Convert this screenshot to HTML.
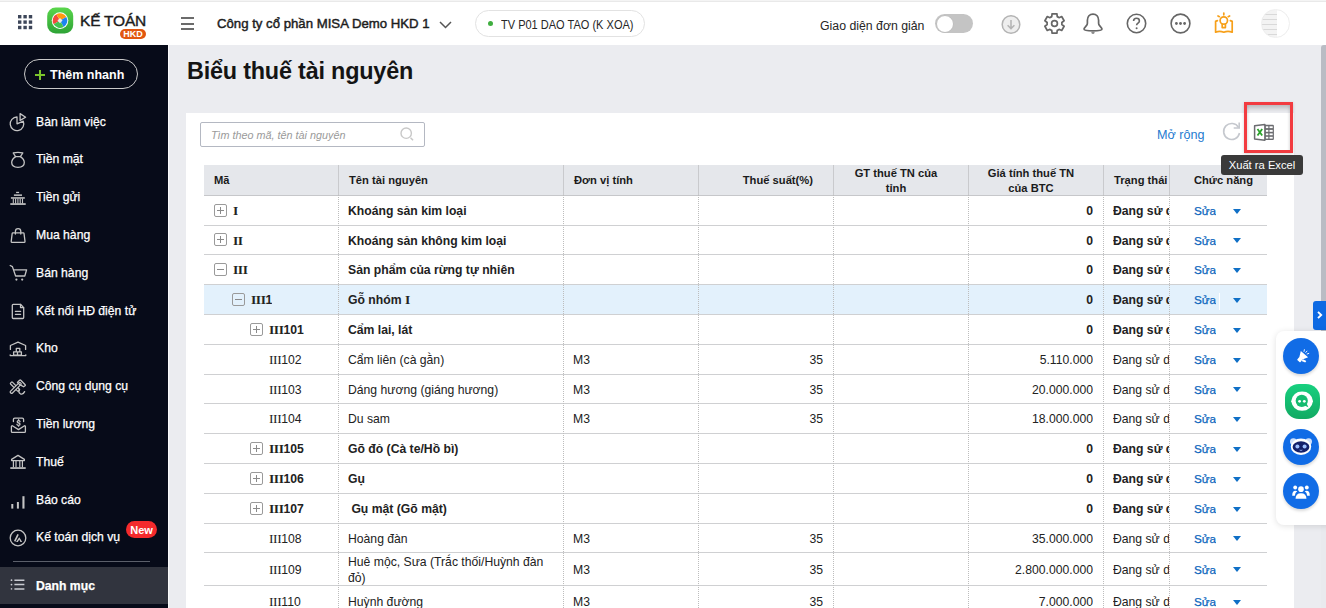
<!DOCTYPE html><html><head><meta charset="utf-8"><style>
*{box-sizing:border-box;margin:0;padding:0}
html,body{width:1326px;height:608px;overflow:hidden;background:#ebecf0;font-family:"Liberation Sans",sans-serif;color:#1f1f1f}
.a{position:absolute}
.nw{white-space:nowrap}
#top{position:absolute;left:0;top:0;width:1326px;height:45px;background:#fff}
#side{position:absolute;left:0;top:45px;width:168px;height:563px;background:#070b19}
#panel{position:absolute;left:186px;top:113px;width:1108px;height:495px;background:#fff}
.nav{position:absolute;left:36px;color:#fff;font-size:12.2px;white-space:nowrap;line-height:16px;-webkit-text-stroke:0.25px #fff}
.ico{position:absolute;left:9px;width:18px;height:18px}
.th{position:absolute;top:165px;height:30px;background:#e5e7eb;font-weight:bold;font-size:11.2px;line-height:15px;color:#1b1b1b;white-space:nowrap;display:flex;align-items:center;border-right:1px solid #c9cacd}
.row{position:absolute;left:204px;width:1063px;border-bottom:1px solid #cfd0d2}
.c{position:absolute;top:0;height:100%;padding-top:1px;display:flex;align-items:center;font-size:12.2px;color:#222;white-space:nowrap;overflow:hidden}
.vl{position:absolute;top:195px;width:0;height:413px;border-left:1px dotted #bdbdbd}
.box{position:absolute;width:13px;height:13px;border:1px solid #9a9a9a;border-radius:2px}
.box:before{content:"";position:absolute;left:2px;top:5px;width:7px;height:1px;background:#8a8a8a}
.box.p:after{content:"";position:absolute;left:5px;top:2px;width:1px;height:7px;background:#8a8a8a}
.sua{padding-top:0 !important;color:#0c66bd;font-size:11.7px;-webkit-text-stroke:0.25px #0c66bd}
.tri{position:absolute;width:0;height:0;border-left:4.5px solid transparent;border-right:4.5px solid transparent;border-top:5px solid #0f6fc6}
</style></head><body>
<div id="top"><div class="a" style="left:0;top:0;width:1326px;height:1px;background:#f4f4f4"></div><div class="a" style="left:0;top:1px;width:1326px;height:1px;background:#e9e9e9"></div>
<svg class="a" style="left:18px;top:15px" width="15" height="15" viewBox="0 0 15 15"><rect x="0.0" y="0.0" width="3.4" height="3.4" fill="#3d4659"/><rect x="5.4" y="0.0" width="3.4" height="3.4" fill="#3d4659"/><rect x="10.8" y="0.0" width="3.4" height="3.4" fill="#3d4659"/><rect x="0.0" y="5.4" width="3.4" height="3.4" fill="#3d4659"/><rect x="5.4" y="5.4" width="3.4" height="3.4" fill="#3d4659"/><rect x="10.8" y="5.4" width="3.4" height="3.4" fill="#3d4659"/><rect x="0.0" y="10.8" width="3.4" height="3.4" fill="#3d4659"/><rect x="5.4" y="10.8" width="3.4" height="3.4" fill="#3d4659"/><rect x="10.8" y="10.8" width="3.4" height="3.4" fill="#3d4659"/></svg>
<svg class="a" style="left:47px;top:6.5px" width="27" height="27" viewBox="0 0 27 27"><defs><linearGradient id="lg" x1="0" y1="0" x2="0" y2="1"><stop offset="0" stop-color="#5ad64c"/><stop offset="1" stop-color="#2ea336"/></linearGradient></defs><rect x="0.2" y="0.6" width="26" height="25.8" rx="8.5" fill="url(#lg)"/><circle cx="13" cy="13.6" r="8.3" fill="#fff"/><path d="M13.00 13.60 L6.68 17.25 A7.30 7.30 0 0 1 9.35 7.28 Z" fill="#f44a3c"/><path d="M13.00 13.60 L9.35 7.28 A7.30 7.30 0 0 1 19.32 9.95 Z" fill="#ff9a10"/><path d="M13.00 13.60 L19.32 9.95 A7.30 7.30 0 0 1 16.65 19.92 Z" fill="#1d84f0"/><path d="M13.00 13.60 L16.65 19.92 A7.30 7.30 0 0 1 6.68 17.25 Z" fill="#43c251"/><rect x="11.2" y="11.8" width="3.6" height="3.6" transform="rotate(45 13 13.6)" fill="#e9e9e9"/></svg>
<div class="a nw" style="left:80px;top:12px;font-size:15.5px;line-height:18px;color:#1d1d1d;letter-spacing:-0.2px;-webkit-text-stroke:0.4px #1d1d1d">KẾ TOÁN</div>
<div class="a" style="left:120px;top:29px;width:26px;height:10px;border-radius:5px;background:#e2560f;color:#fff;font-size:9px;font-weight:bold;line-height:10px;text-align:center">HKD</div>
<div class="a" style="left:181px;top:17px;width:13px;height:2px;background:#6b6b6b"></div>
<div class="a" style="left:181px;top:22.5px;width:13px;height:2px;background:#6b6b6b"></div>
<div class="a" style="left:181px;top:28px;width:13px;height:2px;background:#6b6b6b"></div>
<div class="a nw" style="left:217px;top:15px;font-size:13.2px;line-height:17px;color:#1d1d1d;-webkit-text-stroke:0.45px #1d1d1d">Công ty cổ phần MISA Demo HKD 1</div>
<svg class="a" style="left:439px;top:21px" width="13" height="8" viewBox="0 0 13 8"><path d="M1 1 L6.5 6.5 L12 1" fill="none" stroke="#555" stroke-width="1.5"/></svg>
<div class="a" style="left:475px;top:10px;width:170px;height:27px;border:1px solid #e2e2e2;border-radius:14px"></div>
<div class="a" style="left:487.5px;top:21px;width:5px;height:5px;border-radius:50%;background:#3fae3f"></div>
<div class="a nw" style="left:501px;top:18px;font-size:12.6px;line-height:15px;color:#262626;transform:scaleX(0.875);transform-origin:0 50%">TV P01 DAO TAO (K XOA)</div>
<div class="a nw" style="left:820px;top:17.5px;font-size:12.3px;line-height:16px;color:#262626">Giao diện đơn giản</div>
<div class="a" style="left:935px;top:14px;width:38px;height:19px;border-radius:10px;background:#c4c4c4"></div>
<div class="a" style="left:935.5px;top:14.5px;width:18px;height:18px;border-radius:50%;background:#fff;border:1px solid #bdbdbd"></div>
<svg class="a" style="left:1000px;top:13.5px" width="22" height="21" viewBox="0 0 22 21"><circle cx="11" cy="10.5" r="8.8" fill="#eeeeee" stroke="#b3b3b3" stroke-width="1.5"/><path d="M11 6 V14.6 M7.6 11.3 L11 14.6 L14.4 11.3" fill="none" stroke="#b3b3b3" stroke-width="1.5"/></svg>
<svg class="a" style="left:1044px;top:13px" width="21" height="21" viewBox="0 0 21 21"><path fill="none" stroke="#666" stroke-width="1.7" stroke-linejoin="round" d="M13.27 17.36L12.92 20.20L8.08 20.20L7.73 17.36A7.4 7.4 0 0 1 5.94 16.33L3.31 17.45L0.89 13.26L3.17 11.53A7.4 7.4 0 0 1 3.17 9.47L0.89 7.74L3.31 3.55L5.94 4.67A7.4 7.4 0 0 1 7.73 3.64L8.08 0.80L12.92 0.80L13.27 3.64A7.4 7.4 0 0 1 15.06 4.67L17.69 3.55L20.11 7.74L17.83 9.47A7.4 7.4 0 0 1 17.83 11.53L20.11 13.26L17.69 17.45L15.06 16.33A7.4 7.4 0 0 1 13.27 17.36Z"/><circle cx="10.5" cy="10.5" r="2.9" fill="none" stroke="#666" stroke-width="1.7"/></svg>
<svg class="a" style="left:1082px;top:13px" width="22" height="22" viewBox="0 0 22 22"><path fill="none" stroke="#666" stroke-width="1.7" d="M11 1.1C7.6 1.1 5.4 3.6 5.4 7.2V10.2C5.4 11.2 5 12 4.2 12.9C3.2 14 2 15 2 16C2 17.4 6 17.8 11 17.8S20 17.4 20 16C20 15 18.8 14 17.8 12.9C17 12 16.6 11.2 16.6 10.2V7.2C16.6 3.6 14.4 1.1 11 1.1Z"/><path d="M9.2 19.2H12.8Q12.4 20.8 11 20.8Q9.6 20.8 9.2 19.2Z" fill="#666"/></svg>
<svg class="a" style="left:1126px;top:13px" width="21" height="21" viewBox="0 0 21 21"><circle cx="10.5" cy="10.5" r="9.2" fill="none" stroke="#666" stroke-width="1.6"/><path d="M7.6 8.1c0-1.7 1.3-2.8 2.9-2.8s2.9 1 2.9 2.6c0 2.1-2.8 2.2-2.8 4.3" fill="none" stroke="#666" stroke-width="1.6"/><circle cx="10.6" cy="15.2" r="1" fill="#666"/></svg>
<svg class="a" style="left:1170px;top:13px" width="21" height="21" viewBox="0 0 21 21"><circle cx="10.5" cy="10.5" r="9.4" fill="none" stroke="#666" stroke-width="1.6"/><circle cx="6.4" cy="10.5" r="1.4" fill="#666"/><circle cx="10.5" cy="10.5" r="1.4" fill="#666"/><circle cx="14.6" cy="10.5" r="1.4" fill="#666"/></svg>
<svg class="a" style="left:1208px;top:8px" width="32" height="30" viewBox="0 0 32 30"><g fill="none" stroke="#f7a01a" stroke-width="1.7" stroke-linecap="round" stroke-linejoin="round"><path d="M9.4 12.6L7.6 13.4V24.2Q11.6 22.4 15.8 24.2Q20 22.4 24.2 24.2V13.4L22.4 12.6"/><circle cx="15.8" cy="12.5" r="3.7"/><path d="M14.2 16V19.6H17.4V16"/><path d="M15.8 5V6.8M10 7.9L11.4 8.7M21.6 7.9L20.2 8.7"/></g></svg>
<div class="a" style="left:1261px;top:9px;width:29px;height:29px;border-radius:50%;border:1px solid #eee;background:linear-gradient(90deg,transparent 55%,#fff 55%),repeating-linear-gradient(180deg,#f3f3f3 0,#f3f3f3 4px,#d9d9d9 4px,#d9d9d9 5px);overflow:hidden"></div>
</div>
<div id="side">
<div class="a" style="left:24px;top:14px;width:114px;height:30px;border:1px solid #c9c9c9;border-radius:15px"></div>
<div class="a" style="left:35px;top:29px;width:10px;height:2px;background:#7bc52c"></div>
<div class="a" style="left:39px;top:25px;width:2px;height:10px;background:#7bc52c"></div>
<div class="a nw" style="left:50px;top:22px;font-size:12.5px;line-height:17px;color:#fff;font-weight:bold">Thêm nhanh</div>
<div class="nav" style="top:68.5px">Bàn làm việc</div>
<svg class="a" style="left:6px;top:63px" width="24" height="26" viewBox="0 0 24 26"><path fill="none" stroke="#c4c4c4" stroke-width="1.3" stroke-linecap="round" stroke-linejoin="round" d="M11 9A6.8 6.8 0 1 0 17.26 13.15L11 15.8Z"/><path fill="none" stroke="#c4c4c4" stroke-width="1.3" stroke-linecap="round" stroke-linejoin="round" d="M14.1 5.6V12.4L19.6 9.3Z"/></svg>
<div class="nav" style="top:106.3px">Tiền mặt</div>
<svg class="a" style="left:6px;top:102px" width="24" height="26" viewBox="0 0 24 26"><path fill="none" stroke="#c4c4c4" stroke-width="1.3" stroke-linecap="round" stroke-linejoin="round" d="M7.2 6Q12 4.8 16.8 6L14.4 9.6Q18.3 12 18.3 15.6Q18.3 20.4 12 20.4Q5.7 20.4 5.7 15.6Q5.7 12 9.6 9.6Z"/><path fill="none" stroke="#c4c4c4" stroke-width="1.3" stroke-linecap="round" stroke-linejoin="round" d="M9.4 9.6H14.6"/></svg>
<div class="nav" style="top:144.1px">Tiền gửi</div>
<svg class="a" style="left:6px;top:140px" width="24" height="26" viewBox="0 0 24 26"><rect x="10.1" y="6.8" width="3" height="1.3" fill="#c4c4c4"/><rect x="7.9" y="9.4" width="8.1" height="1.5" fill="#c4c4c4"/><rect x="4.9" y="12.2" width="13.9" height="1.5" fill="#c4c4c4"/><path d="M7.3 13.5V18.4M9.6 13.5V18.4M11.9 13.5V18.4M14.2 13.5V18.4M16.5 13.5V18.4" stroke="#c4c4c4" stroke-width="1.1"/><rect x="4.3" y="18.2" width="15.4" height="1.7" fill="#c4c4c4"/></svg>
<div class="nav" style="top:181.9px">Mua hàng</div>
<svg class="a" style="left:6px;top:177px" width="24" height="26" viewBox="0 0 24 26"><path fill="none" stroke="#c4c4c4" stroke-width="1.3" stroke-linecap="round" stroke-linejoin="round" d="M9.4 12V9.4A2.7 2.7 0 0 1 14.8 9.4V12"/><path fill="none" stroke="#c4c4c4" stroke-width="1.3" stroke-linecap="round" stroke-linejoin="round" d="M6.8 10.8H17.4Q17.9 10.8 18 11.3L19 19.4Q19 20.3 18.2 20.3H6Q5.2 20.3 5.2 19.4L6.2 11.3Q6.3 10.8 6.8 10.8Z"/></svg>
<div class="nav" style="top:219.7px">Bán hàng</div>
<svg class="a" style="left:6px;top:215px" width="24" height="26" viewBox="0 0 24 26"><path fill="none" stroke="#c4c4c4" stroke-width="1.3" stroke-linecap="round" stroke-linejoin="round" d="M4.2 5.5L6.4 6.6L9.6 16H18.8L20.6 9.8H8"/><circle cx="10.4" cy="19.6" r="1.1" fill="#c4c4c4"/><circle cx="16.2" cy="19.6" r="1.1" fill="#c4c4c4"/></svg>
<div class="nav" style="top:257.5px">Kết nối HĐ điện tử</div>
<svg class="a" style="left:6px;top:253px" width="24" height="26" viewBox="0 0 24 26"><path fill="none" stroke="#c4c4c4" stroke-width="1.3" stroke-linecap="round" stroke-linejoin="round" d="M7.2 6.3H14.5L17.7 9.6V19.6Q17.7 20.5 16.8 20.5H7.2Q6.3 20.5 6.3 19.6V7.2Q6.3 6.3 7.2 6.3Z"/><path fill="none" stroke="#c4c4c4" stroke-width="1.3" stroke-linecap="round" stroke-linejoin="round" d="M14.5 6.5V9.6H17.6"/><path fill="none" stroke="#c4c4c4" stroke-width="1.3" stroke-linecap="round" stroke-linejoin="round" d="M9.4 13.4H14.6M9.4 16.3H14.6"/></svg>
<div class="nav" style="top:295.3px">Kho</div>
<svg class="a" style="left:6px;top:291px" width="24" height="26" viewBox="0 0 24 26"><path fill="none" stroke="#c4c4c4" stroke-width="1.3" stroke-linecap="round" stroke-linejoin="round" d="M4.4 13.4V9.5L12 6.2L19.6 9.5V13.4"/><path fill="none" stroke="#c4c4c4" stroke-width="1.3" stroke-linecap="round" stroke-linejoin="round" d="M4.2 18.8V19.6H19.8V18.8"/><path fill="none" stroke="#c4c4c4" stroke-width="1.3" stroke-linecap="round" stroke-linejoin="round" d="M10.3 12.4H13.8V15.8H10.3ZM7.6 15.8H11.5V19.2H7.6ZM11.5 15.8H15.4V19.2H11.5Z"/></svg>
<div class="nav" style="top:333.1px">Công cụ dụng cụ</div>
<svg class="a" style="left:6px;top:329px" width="24" height="26" viewBox="0 0 24 26"><rect x="-1.3" y="-5.6" width="2.6" height="11.2" rx="0.6" transform="translate(9 12.6) rotate(-45)" fill="#070b19" stroke="#c4c4c4" stroke-width="1.2"/><path fill="none" stroke="#c4c4c4" stroke-width="1.3" stroke-linecap="round" stroke-linejoin="round" d="M13.2 15.4Q12 18.4 14.4 19.8Q17 21 18.6 17.6"/><rect x="-1.3" y="-7" width="2.6" height="14" rx="0.8" transform="translate(9.7 13.9) rotate(45)" fill="#070b19" stroke="#c4c4c4" stroke-width="1.2"/><path fill="none" stroke="#c4c4c4" stroke-width="1.3" stroke-linecap="round" stroke-linejoin="round" fill="#070b19" d="M11.4 8.4L13.6 6.2Q14.2 5.8 14.8 6.2L19.2 10.8Q19.6 11.4 19 11.8L17.6 12.8L15.2 11.4L13.8 10.8Z"/></svg>
<div class="nav" style="top:370.9px">Tiền lương</div>
<svg class="a" style="left:6px;top:367px" width="24" height="26" viewBox="0 0 24 26"><path fill="none" stroke="#c4c4c4" stroke-width="1.3" stroke-linecap="round" stroke-linejoin="round" d="M7.4 9.6V7.6Q7.4 6.2 8.8 6.2H16.2Q17.6 6.2 17.6 7.6V9.6"/><path fill="none" stroke="#c4c4c4" stroke-width="1.3" stroke-linecap="round" stroke-linejoin="round" d="M14 9.6Q13.6 8.6 12.6 8.6Q11.2 8.6 11.2 9.8Q11.2 10.8 12.6 11Q14 11.2 14 12.3Q14 13.4 12.6 13.4Q11.4 13.4 11 12.4M12.6 7.6V8.6M12.6 13.4V14.2"/><path fill="none" stroke="#c4c4c4" stroke-width="1.3" stroke-linecap="round" stroke-linejoin="round" d="M6.4 13.8L12.5 17.6L18.5 13.8Q19.4 13.6 19.4 14.6V19.4Q19.4 20.4 18.4 20.4H6.4Q5.4 20.4 5.4 19.4V14.6Q5.4 13.6 6.4 13.8Z"/></svg>
<div class="nav" style="top:408.7px">Thuế</div>
<svg class="a" style="left:6px;top:404px" width="24" height="26" viewBox="0 0 24 26"><path fill="none" stroke="#c4c4c4" stroke-width="1.3" stroke-linecap="round" stroke-linejoin="round" d="M5.6 10.4L12 6.4L18.4 10.4V11.6H5.6Z"/><path d="M7.4 12V18.2M10 12V18.2M13.8 12V18.2M16.4 12V18.2" stroke="#c4c4c4" stroke-width="1.2"/><rect x="4.3" y="18.2" width="15.4" height="1.7" fill="#c4c4c4"/></svg>
<div class="nav" style="top:446.5px">Báo cáo</div>
<svg class="a" style="left:6px;top:444px" width="24" height="26" viewBox="0 0 24 26"><rect x="5.3" y="15" width="2" height="4.6" fill="#c4c4c4"/><rect x="10.9" y="13" width="2" height="6.6" fill="#c4c4c4"/><rect x="16.4" y="7.2" width="2.1" height="12.4" fill="#c4c4c4"/></svg>
<div class="nav" style="top:484.3px">Kế toán dịch vụ</div>
<svg class="a" style="left:6px;top:481px" width="24" height="26" viewBox="0 0 24 26"><circle cx="12" cy="12" r="7.8" fill="none" stroke="#c4c4c4" stroke-width="1.3" stroke-linecap="round" stroke-linejoin="round"/><path fill="none" stroke="#c4c4c4" stroke-width="1.6" stroke-linejoin="round" d="M8.7 15.3L12.1 8.4"/><path fill="#c4c4c4" d="M10 15.9L13.3 11.2L16.2 15.9Z"/><path fill="#070b19" d="M11.9 15.9L13.3 13.6L14.4 15.9Z"/></svg>
<div class="a" style="left:126px;top:476px;width:31px;height:17px;border-radius:9px;background:#f42a2c;color:#fff;font-size:11px;font-weight:bold;line-height:18px;text-align:center">New</div>
<div class="a" style="left:13px;top:516px;width:137px;height:1px;background:#5b5f6a"></div>
<div class="a" style="left:0;top:522px;width:168px;height:37px;background:#31343e"></div>
<div class="nav" style="top:533px;font-weight:bold">Danh mục</div>
<svg class="a" style="left:6px;top:527px" width="24" height="26" viewBox="0 0 24 26"><g fill="#c9cbd2"><circle cx="5.5" cy="8.2" r="0.9"/><circle cx="5.5" cy="12.6" r="0.9"/><rect x="4.8" y="16.2" width="1.4" height="1.4"/></g><path d="M8.4 8.2H18.4M8.4 12.6H18.4M8.4 16.9H18.4" stroke="#c9cbd2" stroke-width="1.5"/></svg>
</div>
<div class="a" style="left:168px;top:45px;width:1px;height:563px;background:#fafafa"></div>
<div class="a nw" style="left:187px;top:59px;font-size:23.4px;line-height:24px;font-weight:bold;color:#141414;letter-spacing:-0.2px">Biểu thuế tài nguyên</div>
<div id="panel"></div>
<div class="a" style="left:200px;top:122px;width:225px;height:25px;border:1px solid #b4b8c2;border-radius:2px;background:#fff"></div>
<div class="a nw" style="left:211px;top:128px;font-size:10.8px;line-height:14px;font-style:italic;color:#9a9a9a">Tìm theo mã, tên tài nguyên</div>
<svg class="a" style="left:399px;top:126px" width="16" height="16" viewBox="0 0 16 16"><circle cx="7.2" cy="7.2" r="5.2" fill="none" stroke="#c8c8c8" stroke-width="1.4"/><path d="M12 12.2l1.6 1.6" stroke="#c8c8c8" stroke-width="1.6" stroke-linecap="round"/></svg>
<div class="a nw" style="left:1157px;top:127px;font-size:12.6px;line-height:16px;color:#1f7bd0">Mở rộng</div>
<svg class="a" style="left:1221px;top:121px" width="21" height="21" viewBox="0 0 21 21"><path d="M17.6 6.5A8 8 0 1 0 18.5 12" fill="none" stroke="#c5c8ce" stroke-width="1.6"/><path d="M18.2 1.5v5.5h-5.5" fill="none" stroke="#c5c8ce" stroke-width="1.6"/></svg>
<svg class="a" style="left:1248px;top:116px" width="32" height="32" viewBox="0 0 32 32"><rect x="16.6" y="8.8" width="9.3" height="15.3" rx="1.1" fill="#6b6c70"/><rect x="17.7" y="10.3" width="2.6" height="1.8" fill="#fff"/><rect x="17.7" y="13.9" width="2.6" height="1.9" fill="#fff"/><rect x="17.7" y="17.4" width="2.6" height="1.8" fill="#fff"/><rect x="17.7" y="20.8" width="2.6" height="1.8" fill="#fff"/><rect x="21.5" y="10.3" width="3.2" height="1.8" fill="#fff"/><rect x="21.5" y="13.9" width="3.2" height="1.9" fill="#fff"/><rect x="21.5" y="17.4" width="3.2" height="1.8" fill="#fff"/><rect x="21.5" y="20.8" width="3.2" height="1.8" fill="#fff"/><path d="M6.6 9.7L16.9 8.5V24.3L6.6 23.1Z" fill="#fff" stroke="#6b6c70" stroke-width="1.5" stroke-linejoin="round"/><path d="M9.5 13L14.2 19.6M14.2 13L9.5 19.6" stroke="#2ba32b" stroke-width="1.8"/></svg>
<div class="a" style="left:1244px;top:102px;width:49px;height:51px;border:3px solid #f23b40;box-shadow:inset 0 5px 5px -2px rgba(0,0,0,0.22),inset 3px 0 3px -2px rgba(0,0,0,0.08),inset -3px 0 3px -2px rgba(0,0,0,0.08),0 1px 3px rgba(0,0,0,0.18)"></div>
<div class="th" style="left:204.0px;width:135.0px;justify-content:flex-start;text-align:left;padding:0 10px;">Mã</div>
<div class="th" style="left:339.0px;width:225.0px;justify-content:flex-start;text-align:left;padding:0 10px;">Tên tài nguyên</div>
<div class="th" style="left:564.0px;width:135.0px;justify-content:flex-start;text-align:left;padding:0 10px;">Đơn vị tính</div>
<div class="th" style="left:699.0px;width:135.0px;justify-content:flex-end;text-align:right;padding:0 20px 0 10px;">Thuế suất(%)</div>
<div class="th" style="left:834.0px;width:135.0px;justify-content:center;text-align:center;padding:1px 10px 0 0;">GT thuế TN của<br>tỉnh</div>
<div class="th" style="left:969.0px;width:135.0px;justify-content:center;text-align:center;padding:1px 10px 0 0;">Giá tính thuế TN<br>của BTC</div>
<div class="th" style="left:1104.0px;width:66.0px;justify-content:flex-start;text-align:left;padding:0 10px;">Trạng thái</div>
<div class="th" style="left:1170.0px;width:97.0px;justify-content:center;text-align:center;padding:0 0 0 10px;border-right:none">Chức năng</div>
<div class="a" style="left:204px;top:195px;width:1063px;height:1px;background:#c6c7ca"></div>
<div class="row" style="top:196.0px;height:30.0px;background:#fff">
<div class="box p" style="left:10px;top:50%;margin-top:-7px"></div>
<div class="c" style="left:29px;font-weight:bold"><span style="font-family:'Liberation Serif',serif;font-size:13.5px;letter-spacing:-0.4px">I</span></div>
<div class="c" style="left:144px;width:215px;font-weight:bold;white-space:normal;line-height:16px">Khoáng sản kim loại</div>
<div class="c" style="left:764px;width:125px;justify-content:flex-end;font-weight:bold">0</div>
<div class="c" style="left:909px;width:56px;font-weight:bold">Đang sử dụng</div>
<div class="c sua" style="left:990px">Sửa</div>
<div class="tri" style="left:1029px;top:50%;margin-top:-2px"></div>
</div>
<div class="row" style="top:226.0px;height:29.0px;background:#fff">
<div class="box p" style="left:10px;top:50%;margin-top:-7px"></div>
<div class="c" style="left:29px;font-weight:bold"><span style="font-family:'Liberation Serif',serif;font-size:13.5px;letter-spacing:-0.4px">II</span></div>
<div class="c" style="left:144px;width:215px;font-weight:bold;white-space:normal;line-height:16px">Khoáng sản không kim loại</div>
<div class="c" style="left:764px;width:125px;justify-content:flex-end;font-weight:bold">0</div>
<div class="c" style="left:909px;width:56px;font-weight:bold">Đang sử dụng</div>
<div class="c sua" style="left:990px">Sửa</div>
<div class="tri" style="left:1029px;top:50%;margin-top:-2px"></div>
</div>
<div class="row" style="top:255.0px;height:30.0px;background:#fff">
<div class="box m" style="left:10px;top:50%;margin-top:-7px"></div>
<div class="c" style="left:29px;font-weight:bold"><span style="font-family:'Liberation Serif',serif;font-size:13.5px;letter-spacing:-0.4px">III</span></div>
<div class="c" style="left:144px;width:215px;font-weight:bold;white-space:normal;line-height:16px">Sản phẩm của rừng tự nhiên</div>
<div class="c" style="left:764px;width:125px;justify-content:flex-end;font-weight:bold">0</div>
<div class="c" style="left:909px;width:56px;font-weight:bold">Đang sử dụng</div>
<div class="c sua" style="left:990px">Sửa</div>
<div class="tri" style="left:1029px;top:50%;margin-top:-2px"></div>
</div>
<div class="row" style="top:285.0px;height:30.0px;background:#e3f1fc">
<div class="box m" style="left:28px;top:50%;margin-top:-7px"></div>
<div class="c" style="left:47px;font-weight:bold"><span style="font-family:'Liberation Serif',serif;font-size:13.5px;letter-spacing:-0.4px">III</span>1</div>
<div class="c" style="left:144px;width:215px;font-weight:bold;white-space:normal;line-height:16px">Gỗ nhóm&nbsp;<span style='font-family:Liberation Serif,serif;font-size:13.5px'>I</span></div>
<div class="c" style="left:764px;width:125px;justify-content:flex-end;font-weight:bold">0</div>
<div class="c" style="left:909px;width:56px;font-weight:bold">Đang sử dụng</div>
<div class="c sua" style="left:990px">Sửa</div>
<div class="tri" style="left:1029px;top:50%;margin-top:-2px"></div>
<div class="a" style="left:1015px;top:8px;width:1px;height:17px;background:#fff"></div>
</div>
<div class="row" style="top:315.0px;height:30.0px;background:#fff">
<div class="box p" style="left:46px;top:50%;margin-top:-7px"></div>
<div class="c" style="left:65px;font-weight:bold"><span style="font-family:'Liberation Serif',serif;font-size:13.5px;letter-spacing:-0.4px">III</span>101</div>
<div class="c" style="left:144px;width:215px;font-weight:bold;white-space:normal;line-height:16px">Cẩm lai, lát</div>
<div class="c" style="left:764px;width:125px;justify-content:flex-end;font-weight:bold">0</div>
<div class="c" style="left:909px;width:56px;font-weight:bold">Đang sử dụng</div>
<div class="c sua" style="left:990px">Sửa</div>
<div class="tri" style="left:1029px;top:50%;margin-top:-2px"></div>
</div>
<div class="row" style="top:345.0px;height:30.0px;background:#fff">
<div class="c" style="left:65px;font-weight:normal"><span style="font-family:'Liberation Serif',serif;font-size:13.5px;letter-spacing:-0.4px">III</span>102</div>
<div class="c" style="left:144px;width:215px;font-weight:normal;white-space:normal;line-height:16px">Cẩm liên (cà gằn)</div>
<div class="c" style="left:369px">M3</div>
<div class="c" style="left:494px;width:125px;justify-content:flex-end">35</div>
<div class="c" style="left:764px;width:125px;justify-content:flex-end;font-weight:normal">5.110.000</div>
<div class="c" style="left:909px;width:56px;font-weight:normal">Đang sử dụng</div>
<div class="c sua" style="left:990px">Sửa</div>
<div class="tri" style="left:1029px;top:50%;margin-top:-2px"></div>
</div>
<div class="row" style="top:375.0px;height:29.0px;background:#fff">
<div class="c" style="left:65px;font-weight:normal"><span style="font-family:'Liberation Serif',serif;font-size:13.5px;letter-spacing:-0.4px">III</span>103</div>
<div class="c" style="left:144px;width:215px;font-weight:normal;white-space:normal;line-height:16px">Dáng hương (giáng hương)</div>
<div class="c" style="left:369px">M3</div>
<div class="c" style="left:494px;width:125px;justify-content:flex-end">35</div>
<div class="c" style="left:764px;width:125px;justify-content:flex-end;font-weight:normal">20.000.000</div>
<div class="c" style="left:909px;width:56px;font-weight:normal">Đang sử dụng</div>
<div class="c sua" style="left:990px">Sửa</div>
<div class="tri" style="left:1029px;top:50%;margin-top:-2px"></div>
</div>
<div class="row" style="top:404.0px;height:30.0px;background:#fff">
<div class="c" style="left:65px;font-weight:normal"><span style="font-family:'Liberation Serif',serif;font-size:13.5px;letter-spacing:-0.4px">III</span>104</div>
<div class="c" style="left:144px;width:215px;font-weight:normal;white-space:normal;line-height:16px">Du sam</div>
<div class="c" style="left:369px">M3</div>
<div class="c" style="left:494px;width:125px;justify-content:flex-end">35</div>
<div class="c" style="left:764px;width:125px;justify-content:flex-end;font-weight:normal">18.000.000</div>
<div class="c" style="left:909px;width:56px;font-weight:normal">Đang sử dụng</div>
<div class="c sua" style="left:990px">Sửa</div>
<div class="tri" style="left:1029px;top:50%;margin-top:-2px"></div>
</div>
<div class="row" style="top:434.0px;height:30.0px;background:#fff">
<div class="box p" style="left:46px;top:50%;margin-top:-7px"></div>
<div class="c" style="left:65px;font-weight:bold"><span style="font-family:'Liberation Serif',serif;font-size:13.5px;letter-spacing:-0.4px">III</span>105</div>
<div class="c" style="left:144px;width:215px;font-weight:bold;white-space:normal;line-height:16px">Gõ đỏ (Cà te/Hồ bì)</div>
<div class="c" style="left:764px;width:125px;justify-content:flex-end;font-weight:bold">0</div>
<div class="c" style="left:909px;width:56px;font-weight:bold">Đang sử dụng</div>
<div class="c sua" style="left:990px">Sửa</div>
<div class="tri" style="left:1029px;top:50%;margin-top:-2px"></div>
</div>
<div class="row" style="top:464.0px;height:30.0px;background:#fff">
<div class="box p" style="left:46px;top:50%;margin-top:-7px"></div>
<div class="c" style="left:65px;font-weight:bold"><span style="font-family:'Liberation Serif',serif;font-size:13.5px;letter-spacing:-0.4px">III</span>106</div>
<div class="c" style="left:144px;width:215px;font-weight:bold;white-space:normal;line-height:16px">Gụ</div>
<div class="c" style="left:764px;width:125px;justify-content:flex-end;font-weight:bold">0</div>
<div class="c" style="left:909px;width:56px;font-weight:bold">Đang sử dụng</div>
<div class="c sua" style="left:990px">Sửa</div>
<div class="tri" style="left:1029px;top:50%;margin-top:-2px"></div>
</div>
<div class="row" style="top:494.0px;height:30.0px;background:#fff">
<div class="box p" style="left:46px;top:50%;margin-top:-7px"></div>
<div class="c" style="left:65px;font-weight:bold"><span style="font-family:'Liberation Serif',serif;font-size:13.5px;letter-spacing:-0.4px">III</span>107</div>
<div class="c" style="left:144px;width:215px;font-weight:bold;white-space:normal;line-height:16px">&nbsp;Gụ mật (Gõ mật)</div>
<div class="c" style="left:764px;width:125px;justify-content:flex-end;font-weight:bold">0</div>
<div class="c" style="left:909px;width:56px;font-weight:bold">Đang sử dụng</div>
<div class="c sua" style="left:990px">Sửa</div>
<div class="tri" style="left:1029px;top:50%;margin-top:-2px"></div>
</div>
<div class="row" style="top:524.0px;height:29.0px;background:#fff">
<div class="c" style="left:65px;font-weight:normal"><span style="font-family:'Liberation Serif',serif;font-size:13.5px;letter-spacing:-0.4px">III</span>108</div>
<div class="c" style="left:144px;width:215px;font-weight:normal;white-space:normal;line-height:16px">Hoàng đàn</div>
<div class="c" style="left:369px">M3</div>
<div class="c" style="left:494px;width:125px;justify-content:flex-end">35</div>
<div class="c" style="left:764px;width:125px;justify-content:flex-end;font-weight:normal">35.000.000</div>
<div class="c" style="left:909px;width:56px;font-weight:normal">Đang sử dụng</div>
<div class="c sua" style="left:990px">Sửa</div>
<div class="tri" style="left:1029px;top:50%;margin-top:-2px"></div>
</div>
<div class="row" style="top:553.0px;height:33.0px;background:#fff">
<div class="c" style="left:65px;font-weight:normal"><span style="font-family:'Liberation Serif',serif;font-size:13.5px;letter-spacing:-0.4px">III</span>109</div>
<div class="c" style="left:144px;width:215px;font-weight:normal;white-space:normal;line-height:16px">Huê mộc, Sưa (Trắc thối/Huỳnh đàn<br>đỏ)</div>
<div class="c" style="left:369px">M3</div>
<div class="c" style="left:494px;width:125px;justify-content:flex-end">35</div>
<div class="c" style="left:764px;width:125px;justify-content:flex-end;font-weight:normal">2.800.000.000</div>
<div class="c" style="left:909px;width:56px;font-weight:normal">Đang sử dụng</div>
<div class="c sua" style="left:990px">Sửa</div>
<div class="tri" style="left:1029px;top:50%;margin-top:-2px"></div>
</div>
<div class="row" style="top:586.0px;height:32.0px;background:#fff">
<div class="c" style="left:65px;font-weight:normal"><span style="font-family:'Liberation Serif',serif;font-size:13.5px;letter-spacing:-0.4px">III</span>110</div>
<div class="c" style="left:144px;width:215px;font-weight:normal;white-space:normal;line-height:16px">Huỳnh đường</div>
<div class="c" style="left:369px">M3</div>
<div class="c" style="left:494px;width:125px;justify-content:flex-end">35</div>
<div class="c" style="left:764px;width:125px;justify-content:flex-end;font-weight:normal">7.000.000</div>
<div class="c" style="left:909px;width:56px;font-weight:normal">Đang sử dụng</div>
<div class="c sua" style="left:990px">Sửa</div>
<div class="tri" style="left:1029px;top:50%;margin-top:-2px"></div>
</div>
<div class="vl" style="left:338.0px"></div>
<div class="vl" style="left:563.0px"></div>
<div class="vl" style="left:698.0px"></div>
<div class="vl" style="left:833.0px"></div>
<div class="vl" style="left:968.0px"></div>
<div class="vl" style="left:1103.0px"></div>
<div class="vl" style="left:1169.0px"></div>
<div class="a nw" style="left:1221px;top:155px;width:82px;height:20px;background:#3a3a3a;border-radius:3px;color:#fff;font-size:11.2px;line-height:20px;text-align:center">Xuất ra Excel</div>
<div class="a" style="left:1321px;top:45px;width:5px;height:563px;background:#e9eaee"></div>
<div class="a" style="left:1321px;top:45px;width:5px;height:290px;background:#b9bcc4;border-radius:3px 0 0 3px"></div>
<div class="a" style="left:1313px;top:301px;width:13px;height:29px;background:#0e6ae3;border-radius:3px 0 0 3px"></div>
<svg class="a" style="left:1316px;top:310px" width="7" height="10" viewBox="0 0 7 10"><path d="M2 1.8L5.2 5L2 8.2" fill="none" stroke="#fff" stroke-width="1.9"/></svg>
<div class="a" style="left:1276px;top:331px;width:60px;height:194px;background:#fff;border-radius:8px;box-shadow:0 1px 6px rgba(0,0,0,0.12)"></div>
<div class="a" style="left:1283px;top:338px;width:36px;height:36px;border-radius:50%;background:#116ce6;box-shadow:0 2px 3px rgba(0,0,0,.15)"></div>
<div class="a" style="left:1284.5px;top:383.5px;width:35px;height:35.5px;border-radius:14px;background:linear-gradient(#17d07f,#12aa63)"></div>
<div class="a" style="left:1283px;top:429px;width:36px;height:36px;border-radius:50%;background:#116ce6;box-shadow:0 2px 3px rgba(0,0,0,.15)"></div>
<div class="a" style="left:1283px;top:473px;width:36px;height:36px;border-radius:50%;background:#116ce6;box-shadow:0 2px 3px rgba(0,0,0,.15)"></div>
<svg class="a" style="left:1290.5px;top:346px" width="22" height="22" viewBox="0 0 22 22"><g transform="translate(11 11) scale(0.85) rotate(-50) translate(-11 -11)"><path d="M5.5 8.6H9L15.5 5.4V16.6L9 13.4H5.5Q4.6 13.4 4.6 12.5V9.5Q4.6 8.6 5.5 8.6Z" fill="#fff"/><path d="M7 13.6H9.6L10.6 17.4Q10.7 18 10.1 18H8.8Q8.3 18 8.2 17.5Z" fill="#fff"/><path d="M17.6 8.6L19.4 7.6M17.9 11H20M17.6 13.4L19.4 14.4" stroke="#fff" stroke-width="1" stroke-linecap="round"/></g></svg>
<svg class="a" style="left:1284px;top:384px" width="35" height="35" viewBox="0 0 35 35"><path d="M7.2 17.2Q9 7.6 18.1 7.6Q27.2 7.6 29 17.2Q27.2 26.8 18.1 26.8Q9 26.8 7.2 17.2Z" fill="#fff"/><circle cx="17.75" cy="16.85" r="6.1" fill="#15bb70"/><path d="M20.4 21.6L24.4 23.2L22.6 19.6Z" fill="#15bb70"/><circle cx="15.6" cy="17.3" r="1.4" fill="#fff"/><circle cx="20.3" cy="17.3" r="1.4" fill="#fff"/></svg>
<svg class="a" style="left:1283px;top:428px" width="36" height="36" viewBox="0 0 36 36"><circle cx="10.4" cy="13.6" r="3.4" fill="#cfe0fb"/><circle cx="25.6" cy="13.6" r="3.4" fill="#cfe0fb"/><ellipse cx="18" cy="18.8" rx="10.2" ry="8.2" fill="#fff"/><ellipse cx="18" cy="19" rx="8.4" ry="5.8" fill="#14206b"/><circle cx="14.4" cy="18.6" r="2" fill="#9fc0ff"/><circle cx="21.6" cy="18.6" r="2" fill="#9fc0ff"/><path d="M16.6 22Q18 23 19.4 22" stroke="#9fc0ff" stroke-width="0.8" fill="none"/></svg>
<svg class="a" style="left:1283px;top:473px" width="36" height="36" viewBox="0 0 36 36"><g fill="#fff" transform="translate(18 18.6) scale(0.88) translate(-18 -18)"><circle cx="18" cy="15.2" r="3.2"/><path d="M11.8 26.2Q11.8 19.8 18 19.8Q24.2 19.8 24.2 26.2Z"/><circle cx="11.4" cy="13.4" r="2.2"/><circle cx="24.6" cy="13.4" r="2.2"/><path d="M8 22.6Q8 17 11.6 17Q13 17 13.8 17.6Q11.2 19.2 11 22.6Z"/><path d="M28 22.6Q28 17 24.4 17Q23 17 22.2 17.6Q24.8 19.2 25 22.6Z"/></g></svg>
</body></html>
